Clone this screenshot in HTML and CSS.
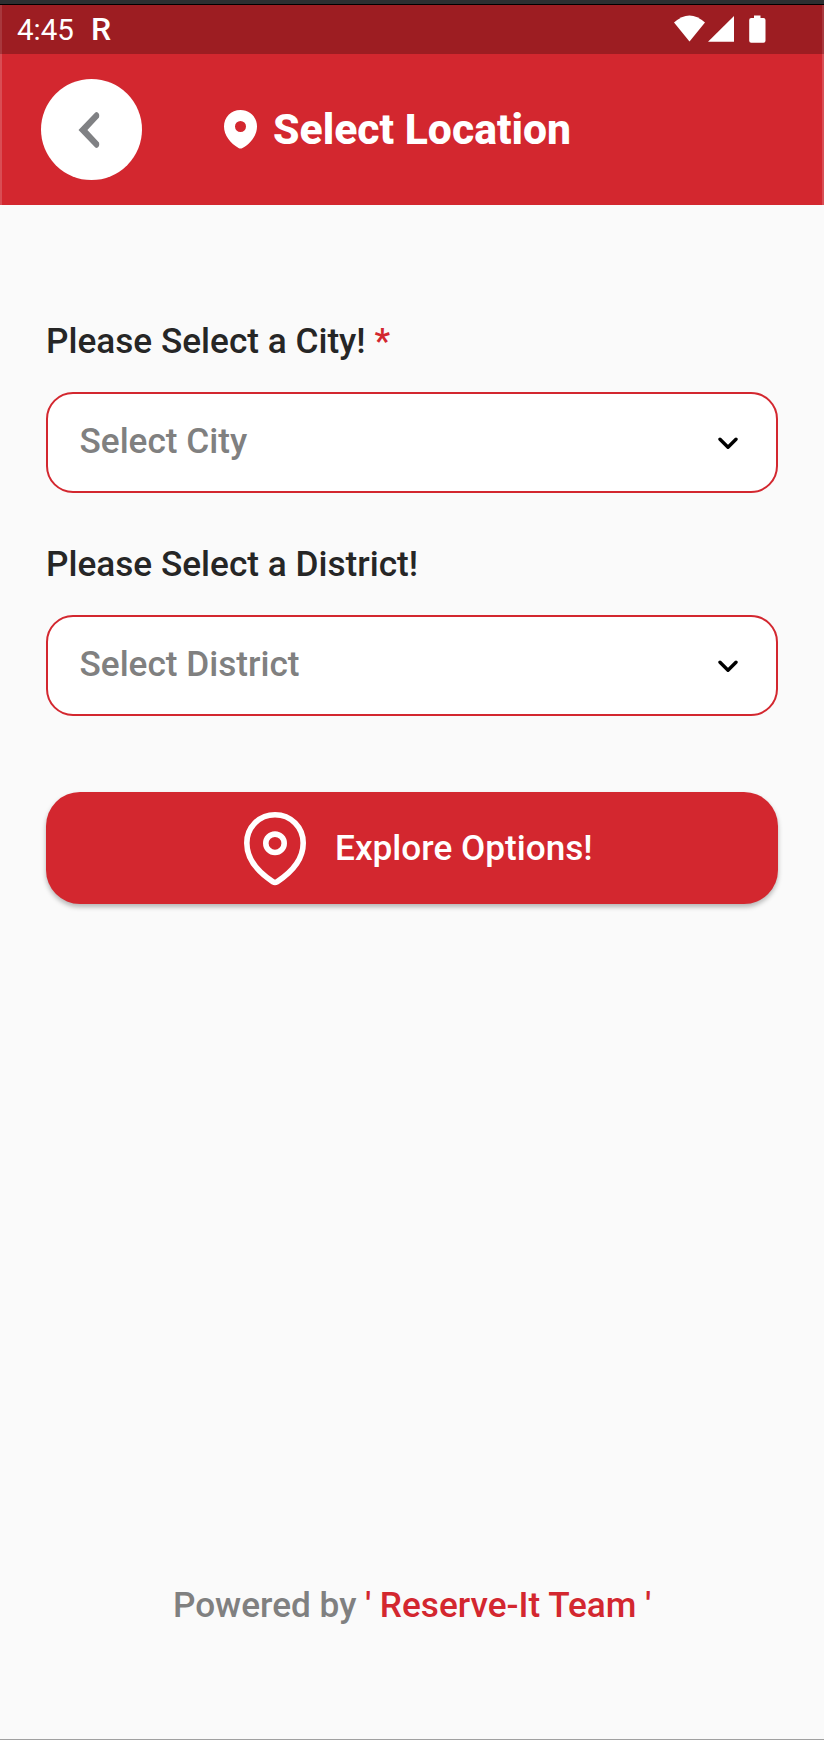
FILE: index.html
```html
<!DOCTYPE html>
<html lang="en">
<head>
<meta charset="utf-8">
<title>Select Location</title>
<link rel="stylesheet" href="styles.css">
</head>
<body>
<div class="screen">
  <div class="bezel"></div>
  <div class="status">
    <span class="time">4:45</span>
    <span class="carrier">R</span>
    <svg class="signals" width="92" height="28" viewBox="0 0 92 28" fill="#fff">
      <path d="M0 7.6Q15.500 -6.800 31 7.600L15.500 26.500Z"/>
      <path d="M34 26.700L60 1V26.700Z"/>
      <path d="M80 .5h6.500v2.500h3q2 0 2 2v20.700q0 2-2 2H77.200q-2 0-2-2V5q0-2 2-2H80Z"/>
    </svg>
  </div>
  <header class="appbar">
    <button class="back" aria-label="Back">
      <svg width="22" height="38" viewBox="0 0 22 38"><path fill="#808184" d="M.5 19 17.300 1.400Q18.700.300 20 1.700L21 2.900Q21.500 4.500 21 6.400L9.400 19 21 31.600Q21.500 33.500 21 35.100L20 36.300Q18.700 37.700 17.300 36.600Z"/></svg>
    </button>
    <svg class="title-pin" width="34" height="39" viewBox="0 0 34 39"><path fill="#fff" fill-rule="evenodd" d="M16.500 0C7 0 0 7.200 0 16.600 0 25.500 6.500 33.500 14.500 38Q16.500 39 18.500 38C26.500 33.500 33 25.500 33 16.600 33 7.200 26 0 16.500 0ZM16.500 11a5.500 5.500 0 1 1 0 11 5.500 5.500 0 0 1 0-11Z"/></svg>
    <h1 class="title">Select Location</h1>
  </header>
  <main class="form">
    <label class="label">Please Select a City! <span class="accent">*</span></label>
    <div class="field">
      <span class="placeholder">Select City</span>
      <svg class="chevron" width="20" height="13" viewBox="0 0 20 13"><path d="M2 2.200 10 10.200 18 2.200"/></svg>
    </div>
    <label class="label second">Please Select a District!</label>
    <div class="field">
      <span class="placeholder">Select District</span>
      <svg class="chevron" width="20" height="13" viewBox="0 0 20 13"><path d="M2 2.200 10 10.200 18 2.200"/></svg>
    </div>
    <button class="explore">
      <svg class="explore-pin" width="62" height="74" viewBox="0 0 62 74" fill="none" stroke="#fff" stroke-width="5.600"><path stroke-linejoin="round" d="M31 2.800C15 2.800 2.800 15.500 2.800 31 2.800 47 14 60 29 69.800Q31 71 33 69.800C48 60 59.200 47 59.200 31 59.200 15.500 47 2.800 31 2.800Z"/><circle cx="31" cy="31.300" r="9.200"/></svg>
      <span>Explore Options!</span>
    </button>
  </main>
  <footer class="footer">Powered by <span class="accent">' Reserve-It Team '</span></footer>
</div>
</body>
</html>
```
FILE: styles.css
```css
* { box-sizing: border-box; }
body { margin: 0; background: #fafafa; font-family: Roboto, sans-serif; }
.screen {
  height: 1740px;
  display: flex;
  flex-direction: column;
  border-bottom: 1px solid #a0a0a0;
}
.bezel { height: 5px; background: #2d2f31; border-bottom: 1px solid #000; }
.status {
  height: 49px;
  display: flex;
  align-items: center;
  padding: 0 56px 0 15px;
  background: #9d1d22;
  border-left: 2px solid #a8383d;
  border-right: 2px solid #a8383d;
  color: #fff;
}
.time { font-size: 29.5px; line-height: 49px; width: 74px; padding-top: 1px; }
.carrier { font-size: 32px; line-height: 49px; font-weight: 500; }
.signals { margin-left: auto; margin-top: -1px; }
.appbar {
  height: 151px;
  display: flex;
  align-items: center;
  padding-left: 39px;
  background: #d3272f;
  border-left: 2px solid #d94d54;
  border-right: 2px solid #d94d54;
}
button { border: 0; padding: 0; font-family: inherit; }
.back {
  width: 101px;
  height: 101px;
  border-radius: 50%;
  background: #fff;
  display: flex;
  align-items: center;
  justify-content: center;
  padding-right: 6px;
}
.title-pin { margin-left: 82px; }
.title { margin: 0 0 2px 15px; color: #fff; font-size: 42.7px; line-height: 50px; font-weight: 800; white-space: nowrap; }
.form { padding: 116px 46px 0; display: flex; flex-direction: column; }
.label { font-size: 35.2px; line-height: 41px; font-weight: 500; color: #262626; white-space: pre; }
.second { margin-top: 51px; }
.accent { color: #d3272f; }
.field {
  height: 101px;
  margin-top: 30px;
  padding: 0 38px 2px 31.5px;
  display: flex;
  align-items: center;
  justify-content: space-between;
  border: 2px solid #d3272f;
  border-radius: 27px;
  background: #fff;
  color: #808080;
  font-size: 35.2px;
  font-weight: 500;
}
.placeholder { line-height: 41px; padding-bottom: 1px; }
.chevron { margin-top: 4px; fill: none; stroke: #000; stroke-width: 3.4; stroke-linecap: round; stroke-linejoin: round; }
.explore {
  height: 112px;
  margin-top: 76px;
  display: flex;
  align-items: center;
  padding-left: 198px;
  gap: 29px;
  border-radius: 34px;
  background: #d3272f;
  color: #fff;
  font-size: 35.2px;
  font-weight: 500;
  box-shadow: 0 3px 5px rgba(0, 0, 0, .28);
}
.explore-pin { margin-top: 2px; }
.footer { margin: auto auto 113px; font-size: 35.2px; line-height: 41px; font-weight: 500; color: #808080; white-space: nowrap; }
```
